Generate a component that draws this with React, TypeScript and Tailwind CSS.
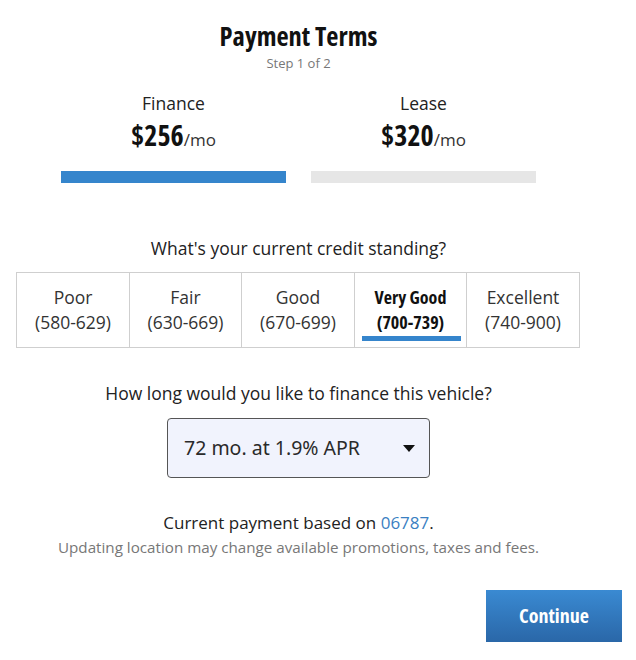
const cond = "font-['Open_Sans',sans-serif] font-bold [font-stretch:75%]";

const tiers = [
  { name: 'Poor', range: '(580-629)' },
  { name: 'Fair', range: '(630-669)' },
  { name: 'Good', range: '(670-699)' },
  { name: 'Very Good', range: '(700-739)', active: true },
  { name: 'Excellent', range: '(740-900)' },
];

function PlanColumn({ label, price, active }: { label: string; price: string; active?: boolean }) {
  return (
    <div className="w-[225px] flex flex-col items-center">
      <div className="text-[17.5px] leading-[24px] text-[#222]">{label}</div>
      <div className="mt-[6px] leading-[28px] text-[#111]">
        <span className={`${cond} text-[28px]`}>{price}</span>
        <span className="text-[17px] text-[#333]">/mo</span>
      </div>
      <div className={`mt-[17px] w-full h-[12px] ${active ? 'bg-[#3585cc]' : 'bg-[#e6e6e6]'}`} />
    </div>
  );
}

export default function App() {
  return (
    <div className="w-[636px] h-[660px] bg-white font-['Open_Sans',sans-serif] text-[#222]">
      <div className="w-[597px] flex flex-col items-center pt-[20px]">
        <h1 className={`${cond} text-[26.5px] leading-[32px] text-[#111]`}>Payment Terms</h1>
        <p className="text-[13px] leading-[16px] text-[#777] mt-[3px]">Step 1 of 2</p>

        <div className="flex gap-[25px] mt-[20px]">
          <PlanColumn label="Finance" price="$256" active />
          <PlanColumn label="Lease" price="$320" />
        </div>

        <p className="mt-[53px] text-[17.5px] leading-[24px]">What's your current credit standing?</p>

        <div className="flex mt-[12px] ml-[-1px]">
          {tiers.map((t) => (
            <div
              key={t.name}
              className="w-[113.5px] h-[76px] border border-[#cfcfcf] -ml-px first:ml-0 flex flex-col items-center justify-center relative"
            >
              {t.active ? (
                <>
                  <span className={`${cond} text-[18px] leading-[25px] text-[#111]`}>{t.name}</span>
                  <span className={`${cond} text-[18px] leading-[25px] text-[#111]`}>{t.range}</span>
                  <span className="absolute left-[7px] right-[5px] bottom-[6px] h-[5px] bg-[#3585cc]" />
                </>
              ) : (
                <>
                  <span className="text-[17.5px] leading-[25px] text-[#333]">{t.name}</span>
                  <span className="text-[17.5px] leading-[25px] text-[#333]">{t.range}</span>
                </>
              )}
            </div>
          ))}
        </div>

        <p className="mt-[33px] text-[17.5px] leading-[24px]">How long would you like to finance this vehicle?</p>

        <div className="mt-[13px] w-[263px] h-[60px] rounded-[4px] border border-[#555] bg-[#f1f3fd] flex items-center justify-between pl-[16px] pr-[14px]">
          <span className="text-[19.5px] text-[#2a2a2a] font-['Noto_Sans',sans-serif]">72 mo. at 1.9% APR</span>
          <svg width="12" height="7" viewBox="0 0 12 7">
            <path d="M0 0h12L6 7z" fill="#111" />
          </svg>
        </div>

        <p className="mt-[33px] text-[17px] leading-[24px] text-[#222]">
          Current payment based on <span className="text-[#3a80c2]">06787</span>.
        </p>
        <p className="text-[15.2px] leading-[24px] text-[#777]">Updating location may change available promotions, taxes and fees.</p>
      </div>

      <div className="flex justify-end pr-[14px] mt-[31px]">
        <button className={`w-[136px] h-[52px] bg-gradient-to-b from-[#3a8ad2] to-[#2a67a8] text-white ${cond} text-[20px]`}>
          Continue
        </button>
      </div>
    </div>
  );
}
